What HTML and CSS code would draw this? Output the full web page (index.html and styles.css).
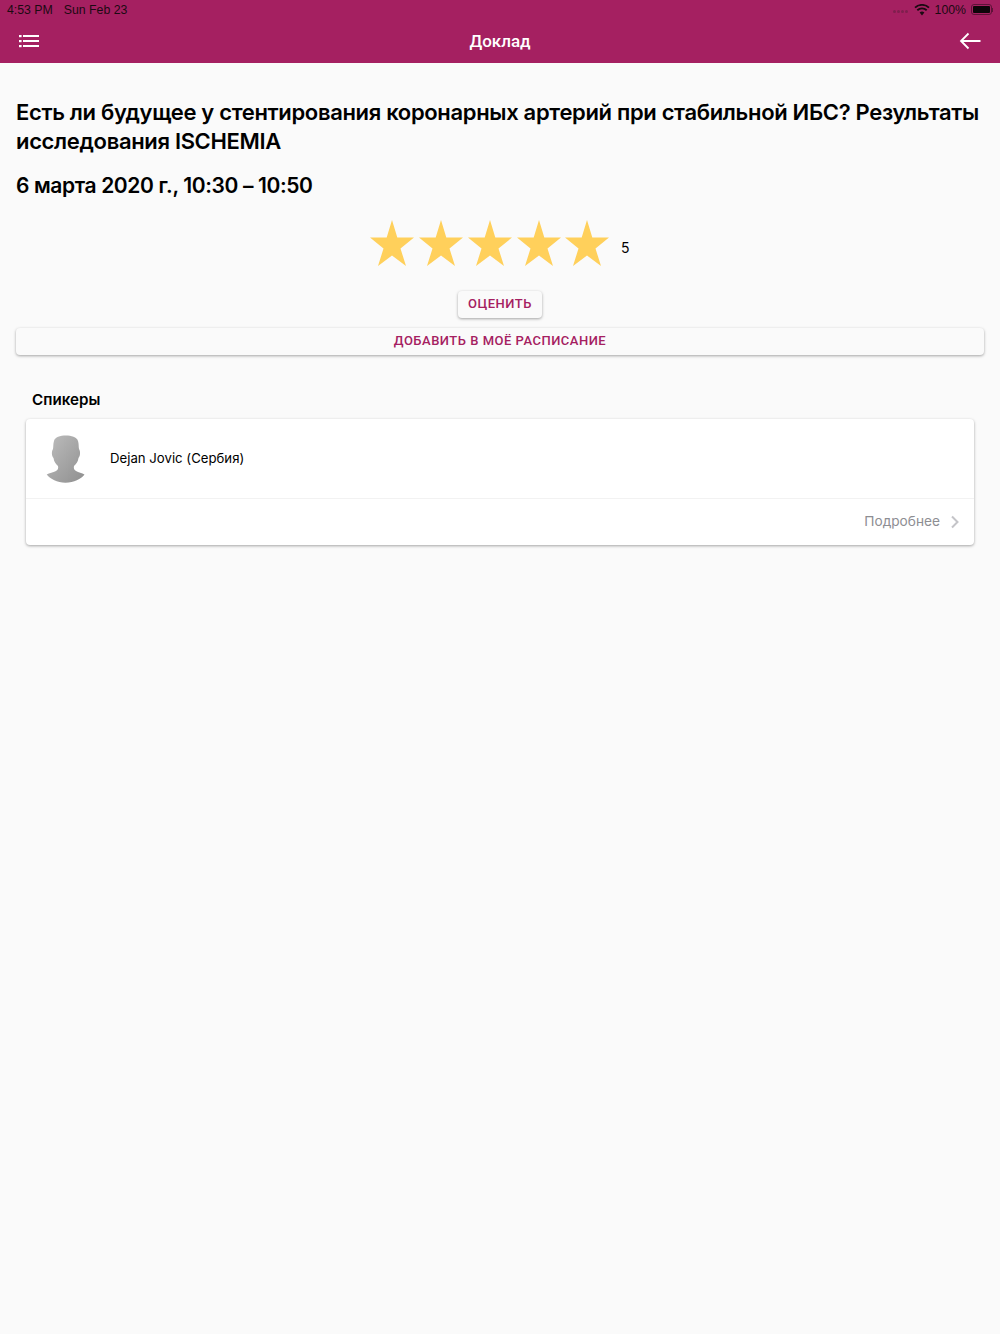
FILE: index.html
```html
<!DOCTYPE html>
<html lang="ru">
<head>
    <meta charset="UTF-8">
    <meta name="viewport" content="width=device-width, initial-scale=1.0">
    <title>Доклад</title>
    <link rel="stylesheet" href="styles.css">
</head>
<body>
    <header class="header">
        <div class="status-bar">
            <div class="status-left">
                <span>4:53 PM</span>
                <span>Sun Feb 23</span>
            </div>
            <div class="status-right">
                <div class="signal"><i></i><i></i><i></i><i></i></div>
                <svg class="wifi" width="16" height="12" viewBox="0 0 16 12">
                    <path d="M8 11.5 5.6 8.6a3.6 3.6 0 0 1 4.8 0z" fill="#1b0a12"/>
                    <path d="M3.3 6.2a7 7 0 0 1 9.4 0" fill="none" stroke="#1b0a12" stroke-width="1.9"/>
                    <path d="M1 3.6a10.4 10.4 0 0 1 14 0" fill="none" stroke="#1b0a12" stroke-width="1.9"/>
                </svg>
                <span>100%</span>
                <div class="battery"><div class="battery-fill"></div></div>
                <div class="battery-cap"></div>
            </div>
        </div>
        <div class="toolbar">
            <svg class="icon-btn" width="22" height="14" viewBox="0 0 22 14">
                <g fill="#fff">
                    <rect x="0" y="1" width="2.6" height="2.2"/>
                    <rect x="0" y="6" width="2.6" height="2.2"/>
                    <rect x="0" y="11" width="2.6" height="2.2"/>
                    <rect x="4" y="1" width="16" height="2"/>
                    <rect x="4" y="6" width="16" height="2"/>
                    <rect x="4" y="11" width="16" height="2"/>
                </g>
            </svg>
            <h1 class="toolbar-title">Доклад</h1>
            <svg class="icon-btn" width="22" height="18" viewBox="0 0 22 18">
                <path d="M21.500 9H2M9.500 1.500 2 9l7.500 7.500" fill="none" stroke="#fff" stroke-width="1.800"/>
            </svg>
        </div>
    </header>

    <main class="content">
        <h2 class="talk-title">Есть ли будущее у стентирования коронарных артерий при стабильной ИБС? Результаты исследования ISCHEMIA</h2>
        <div class="talk-date">6 марта 2020 г., 10:30 – 10:50</div>

        <div class="rating">
            <svg class="star" viewBox="0 0 48 48"><use href="#star"/></svg>
            <svg class="star" viewBox="0 0 48 48"><use href="#star"/></svg>
            <svg class="star" viewBox="0 0 48 48"><use href="#star"/></svg>
            <svg class="star" viewBox="0 0 48 48"><use href="#star"/></svg>
            <svg class="star" viewBox="0 0 48 48"><use href="#star"/></svg>
            <span class="rating-value">5</span>
        </div>

        <div class="rate-row">
            <button class="btn btn-small">Оценить</button>
        </div>
        <button class="btn btn-wide">Добавить в моё расписание</button>

        <h3 class="section-title">Спикеры</h3>
        <div class="card">
            <div class="speaker">
                <svg class="avatar" width="40" height="48" viewBox="0 0 40 48">
                    <defs>
                        <linearGradient id="avatarFill" x1="0" y1="0" x2="1" y2="1">
                            <stop offset="0" stop-color="#bdbdbd"/>
                            <stop offset="1" stop-color="#8f8f8f"/>
                        </linearGradient>
                    </defs>
                    <path d="M20 0.500C25 0.500 31 2 32 6C33 9 32.500 12 33 14C34.500 16 34.500 21 32.500 23C32 27 30 29 28 31C27.500 33 28 35 30 36C32.500 37.500 36 38 38.500 39.500C35 44 28 47.700 19.500 47.700C11 47.700 4.500 44 0.700 39.500C3.500 38 7 37.500 10 36C12 35 12.500 33 12 31C10 29 8 27 7.500 23C5.500 21 5.500 16 7 14C7.500 12 7 9 8 6C9 2 14 0.500 20 0.500Z" fill="url(#avatarFill)"/>
                </svg>
                <span class="speaker-name">Dejan Jovic (Сербия)</span>
            </div>
            <div class="card-footer">
                <span class="more">Подробнее</span>
                <svg class="chevron" width="10" height="14" viewBox="0 0 10 14">
                    <path d="M2 1.500 7.500 7 2 12.500" fill="none" stroke="#c4c4c8" stroke-width="2"/>
                </svg>
            </div>
        </div>
    </main>

    <svg class="defs" width="0" height="0">
        <defs>
            <polygon id="star" fill="#ffd05b" points="23,0 28.300,17.500 45,17.500 31.500,28.500 37,46 23,35.500 9,46 14.500,28.500 1,17.500 17.700,17.500"/>
        </defs>
    </svg>
</body>
</html>
```

FILE: styles.css
```css
html, body {
    height: 100%;
}
body {
    font-family: Inter, "Liberation Sans", sans-serif;
    background-color: #fafafa;
    color: #000;
    margin: 0;
    padding: 0;
    overflow: hidden;
}
.header {
    background-color: #a52061;
    height: 63px;
}
.status-bar {
    height: 19px;
    padding: 0 7px;
    display: flex;
    align-items: center;
    justify-content: space-between;
    font-family: "Liberation Sans", sans-serif;
    font-size: 12.3px;
    color: #1b0a12;
}
.status-left {
    display: flex;
    gap: 11px;
}
.status-right {
    display: flex;
    align-items: center;
    gap: 5px;
}
.signal {
    display: flex;
    gap: 1px;
    margin-top: 3px;
    margin-right: 1px;
}
.signal i {
    width: 3px;
    height: 3px;
    border-radius: 50%;
    background-color: #7f1f4e;
}
.battery {
    width: 21px;
    height: 11px;
    padding: 1px;
    box-sizing: border-box;
    border: 1px solid #5e1238;
    border-radius: 3px;
}
.battery-fill {
    height: 100%;
    background-color: #0d0509;
    border-radius: 1px;
}
.battery-cap {
    width: 1px;
    height: 4px;
    margin-left: -5px;
    background-color: #5e1238;
}
.toolbar {
    height: 44px;
    padding: 0 19px;
    display: flex;
    align-items: center;
    justify-content: space-between;
}
.toolbar-title {
    margin: 0;
    font-family: Roboto, sans-serif;
    font-size: 17px;
    font-weight: 500;
    color: #fff;
}
.content {
    padding: 35px 16px 0;
}
.talk-title {
    margin: 0;
    font-size: 22px;
    line-height: 29px;
    font-weight: 600;
    letter-spacing: -0.335px;
}
.talk-date {
    margin-top: 15px;
    font-size: 21px;
    line-height: 30px;
    font-weight: 600;
    letter-spacing: -0.38px;
}
.rating {
    margin-top: 19px;
    height: 48px;
    display: flex;
    align-items: center;
    justify-content: center;
    gap: 0.75px;
}
.star {
    width: 48px;
    height: 48px;
    overflow: visible;
}
.rating-value {
    margin-left: 8px;
    margin-right: 1px;
    margin-top: 6px;
    font-size: 14px;
}
.rate-row {
    margin-top: 23px;
    display: flex;
    justify-content: center;
}
.btn {
    font-family: Roboto, sans-serif;
    font-size: 13px;
    font-weight: 500;
    letter-spacing: 0.5px;
    text-transform: uppercase;
    color: #a52061;
    background-color: #fafafa;
    border: none;
    border-radius: 4px;
    box-shadow: 0 1px 3px rgba(0,0,0,0.35);
    padding: 0 0 2px;
    height: 27px;
}
.btn-small {
    width: 84px;
}
.btn-wide {
    display: block;
    width: 100%;
    margin-top: 10px;
}
.section-title {
    margin: 35px 0 0 16px;
    font-size: 15.2px;
    line-height: 20px;
    font-weight: 600;
}
.card {
    margin: 9px 10px 0;
    background-color: #fff;
    border-radius: 4px;
    box-shadow: 0 1px 3px rgba(0,0,0,0.35);
}
.speaker {
    height: 79px;
    padding-left: 20px;
    display: flex;
    align-items: center;
    gap: 24px;
    border-bottom: 1px solid #f2f2f2;
}
.avatar {
    margin-top: 1px;
}
.speaker-name {
    font-size: 13.2px;
    margin-top: -2px;
}
.card-footer {
    height: 46px;
    padding-right: 14px;
    display: flex;
    align-items: center;
    justify-content: flex-end;
    gap: 10px;
}
.more {
    font-size: 13.7px;
    margin-top: -2px;
    color: #8e8e93;
}
.defs {
    position: absolute;
}
```
